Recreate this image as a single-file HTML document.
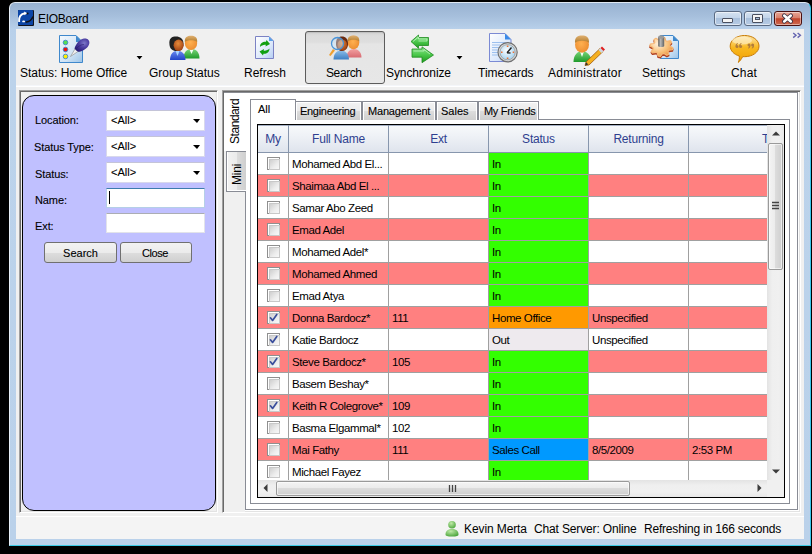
<!DOCTYPE html>
<html><head><meta charset="utf-8">
<style>
*{box-sizing:border-box;margin:0;padding:0}
html,body{width:812px;height:554px;overflow:hidden;background:#000;font-family:"Liberation Sans",sans-serif;color:#000}
.a{position:absolute}
#win{left:9px;top:2px;width:802px;height:544px;border-radius:6px 6px 0 0;
 background:linear-gradient(#98b2d1 0px,#a6bfdc 13px,#b8d0ea 26px,#bcd3eb 60px,#bad1ea 100%);
 border-top:1px solid #dfe8f2;border-left:1px solid #e8f0f8;border-right:1px solid #38c6ea;border-bottom:1px solid #3ccbe6}
#client{left:16px;top:29px;width:788px;height:510px;background:#f0f0f0}
.t12{font-size:12px;line-height:14px;white-space:nowrap}
.t11{font-size:11px;line-height:13px;white-space:nowrap}
.tbt{top:66px;font-size:12px;line-height:14px;white-space:nowrap;color:#000}
.lab{left:35px;font-size:11px;line-height:13px;letter-spacing:-0.1px;-webkit-text-stroke:0.1px #000}
.combo{left:106px;width:99px;height:21px;background:#fff;border:1px solid #d8d8ec;border-top-color:#c4c4d8;border-radius:1px}
.combo span{position:absolute;left:4px;top:3px;font-size:11px;line-height:13px;-webkit-text-stroke:0.1px #000}
.combo i{position:absolute;left:86px;top:8px;width:0;height:0;border-left:4px solid transparent;border-right:3px solid transparent;border-top:4px solid #000}
.btn{top:242px;height:21px;border:1px solid #707070;border-radius:3px;background:linear-gradient(#f2f2f2 0,#ebebeb 50%,#dddddd 51%,#cfcfcf 100%);font-size:11px;line-height:13px;text-align:center;padding-top:4px;-webkit-text-stroke:0.1px #000}
.sunk{border-top:1px solid #a0a0a0;border-left:1px solid #a0a0a0;border-right:1px solid #fff;border-bottom:1px solid #fff;box-shadow:inset 1px 1px 0 #696969,inset -1px -1px 0 #e3e3e3}
.cb{width:13px;height:13px;border:1px solid #8f8f8f;background:#fff}
.cb:after{content:"";position:absolute;left:1px;top:1px;width:9px;height:9px;border:1px solid #c8c8c8;background:linear-gradient(135deg,#cfcfcf 0,#ededed 60%,#f8f8f8 100%)}
.cell{font-size:11.5px;letter-spacing:-0.4px}
</style></head><body>
<div id="win" class="a"></div>
<!-- title icon -->
<svg class="a" style="left:18px;top:10px" width="16" height="16" viewBox="0 0 16 16">
<rect x="0" y="0" width="16" height="16" rx="1" fill="#10131c"/>
<rect x="0" y="0" width="15" height="15" rx="1" fill="#0b45a6"/>
<path d="M1.2 12 C0.6 7 2.8 3.6 7 3.2" stroke="#fff" stroke-width="1.9" fill="none"/>
<path d="M6.2 1.4 L9.4 3.3 L6.4 5.2 Z" fill="#fff"/>
<circle cx="9.6" cy="3.5" r="1" fill="#111"/>
<ellipse cx="5.6" cy="11.4" rx="1.5" ry="0.9" fill="#fff"/>
<path d="M7.6 11.9 C10.5 12.2 13.6 10.2 15 6.6" stroke="#111" stroke-width="1.5" fill="none"/>
</svg>
<div class="a t12" style="left:38px;top:12px;letter-spacing:-0.3px;color:#000">EIOBoard</div>
<!-- caption buttons -->
<div class="a" style="left:714px;top:11px;width:28px;height:15px;border:1px solid #5a6a82;border-radius:3px;background:linear-gradient(#d5e2f0 0,#c3d5ea 45%,#a9c0dc 50%,#b6cbe4 100%);box-shadow:inset 0 0 0 1px rgba(255,255,255,.55)"></div>
<div class="a" style="left:722px;top:18px;width:11px;height:5px;background:#f4f4f4;border:1px solid #4a5060;border-radius:1px"></div>
<div class="a" style="left:744px;top:11px;width:28px;height:15px;border:1px solid #5a6a82;border-radius:3px;background:linear-gradient(#d5e2f0 0,#c3d5ea 45%,#a9c0dc 50%,#b6cbe4 100%);box-shadow:inset 0 0 0 1px rgba(255,255,255,.55)"></div>
<div class="a" style="left:752px;top:14px;width:11px;height:9px;background:#f4f4f4;border:1px solid #4a5060;border-radius:1px"></div>
<div class="a" style="left:755px;top:17px;width:5px;height:3px;background:#a9c0dc;border:1px solid #4a5060"></div>
<div class="a" style="left:774px;top:11px;width:28px;height:15px;border:1px solid #4a1010;border-radius:3px;background:linear-gradient(#e8a595 0,#d9806c 45%,#c0432a 52%,#cf6a52 100%);box-shadow:inset 0 0 0 1px rgba(255,255,255,.45)"></div>
<svg class="a" style="left:781px;top:13px" width="13" height="11" viewBox="0 0 13 11">
<path d="M3.2 2.6 L9.8 8.4 M9.8 2.6 L3.2 8.4" stroke="#3a3040" stroke-width="4.2" stroke-linecap="round"/>
<path d="M3.2 2.6 L9.8 8.4 M9.8 2.6 L3.2 8.4" stroke="#fff" stroke-width="2.6" stroke-linecap="round"/>
</svg>

<div id="client" class="a"></div>
<!-- toolbar bottom line -->
<div class="a" style="left:16px;top:85px;width:788px;height:1px;background:#f4f6fa"></div><div class="a" style="left:16px;top:86px;width:788px;height:1px;background:#fff"></div>

<!-- toolbar texts -->
<div class="a tbt" style="left:20px;">Status: Home Office</div>
<div class="a tbt" style="left:149px;">Group Status</div>
<div class="a tbt" style="left:244px;">Refresh</div>
<div class="a" style="left:305px;top:31px;width:80px;height:53px;border:1px solid #5c5c5c;border-radius:3px;background:linear-gradient(#d2d2d2 0,#dcdcdc 4px,#dedede 10px,#e5e5e5 12px,#e7e7e7 100%);box-shadow:inset 0 1px 1px rgba(0,0,0,.10)"></div>
<div class="a tbt" style="left:326px;letter-spacing:-0.4px">Search</div>
<div class="a tbt" style="left:386px;letter-spacing:-0.1px">Synchronize</div>
<div class="a tbt" style="left:478px;">Timecards</div>
<div class="a tbt" style="left:548px;letter-spacing:0.25px">Administrator</div>
<div class="a tbt" style="left:642px;letter-spacing:0px">Settings</div>
<div class="a tbt" style="left:731px;letter-spacing:0.2px">Chat</div>
<svg class="a" style="left:0;top:0" width="812" height="90" viewBox="0 0 812 90">
<defs>
 <linearGradient id="docg" x1="0" y1="0" x2="1" y2="1"><stop offset="0" stop-color="#f4f9fe"/><stop offset="0.6" stop-color="#cfe3f5"/><stop offset="1" stop-color="#9cc4e8"/></linearGradient>
 <linearGradient id="docg2" x1="0" y1="0" x2="1" y2="1"><stop offset="0" stop-color="#ffffff"/><stop offset="0.6" stop-color="#dde9fb"/><stop offset="1" stop-color="#b4cdf3"/></linearGradient>
 <radialGradient id="pen" cx="0.65" cy="0.35" r="0.7"><stop offset="0" stop-color="#7d78c8"/><stop offset="0.5" stop-color="#4a3ca0"/><stop offset="1" stop-color="#2a1e78"/></radialGradient>
 <radialGradient id="face1" cx="0.45" cy="0.35" r="0.7"><stop offset="0" stop-color="#e58a3a"/><stop offset="1" stop-color="#9a3a10"/></radialGradient>
 <radialGradient id="face2" cx="0.45" cy="0.45" r="0.7"><stop offset="0" stop-color="#ffb050"/><stop offset="1" stop-color="#e8862a"/></radialGradient>
 <linearGradient id="hair2" x1="0" y1="0" x2="0" y2="1"><stop offset="0" stop-color="#e0b070"/><stop offset="1" stop-color="#b07a2a"/></linearGradient>
 <linearGradient id="blue1" x1="0" y1="0" x2="0" y2="1"><stop offset="0" stop-color="#6d8cf0"/><stop offset="1" stop-color="#2244c8"/></linearGradient>
 <linearGradient id="green1" x1="0" y1="0" x2="0" y2="1"><stop offset="0" stop-color="#7ad67a"/><stop offset="1" stop-color="#1f9a2a"/></linearGradient>
 <linearGradient id="blue2" x1="0" y1="0" x2="0" y2="1"><stop offset="0" stop-color="#8cbde8"/><stop offset="1" stop-color="#3d7fc4"/></linearGradient>
 <linearGradient id="pink2" x1="0" y1="0" x2="0" y2="1"><stop offset="0" stop-color="#f2a0a0"/><stop offset="1" stop-color="#d86a72"/></linearGradient>
 <linearGradient id="arrg" x1="0" y1="0" x2="0" y2="1"><stop offset="0" stop-color="#8ee68e"/><stop offset="0.5" stop-color="#4cc84c"/><stop offset="1" stop-color="#1a9a1a"/></linearGradient>
 <radialGradient id="clockf" cx="0.45" cy="0.4" r="0.6"><stop offset="0" stop-color="#ffffff"/><stop offset="1" stop-color="#a8d4f0"/></radialGradient>
 <radialGradient id="gear" cx="0.35" cy="0.35" r="0.75"><stop offset="0" stop-color="#fff0dc"/><stop offset="0.6" stop-color="#f8c078"/><stop offset="1" stop-color="#e89040"/></radialGradient>
 <linearGradient id="cyl" x1="0" y1="0" x2="1" y2="0"><stop offset="0" stop-color="#5a5a5a"/><stop offset="0.4" stop-color="#b8b8b8"/><stop offset="1" stop-color="#606060"/></linearGradient>
 <linearGradient id="chatg" x1="0" y1="0" x2="0" y2="1"><stop offset="0" stop-color="#fde4a8"/><stop offset="0.45" stop-color="#f8b820"/><stop offset="1" stop-color="#f0a000"/></linearGradient>
</defs>

<!-- 1 Status icon -->
<path d="M59.5 35.5 H76 L82.5 42 V62.5 H59.5 Z" fill="url(#docg)" stroke="#3f88cc" stroke-width="1"/>
<path d="M76 35.5 V42 H82.5 Z" fill="#3f88cc"/>
<circle cx="65.5" cy="42.5" r="2.3" fill="#55dd55" stroke="#3f88cc" stroke-width="0.9"/>
<circle cx="65.5" cy="49.5" r="2.3" fill="#ee1111" stroke="#3f88cc" stroke-width="0.9"/>
<circle cx="65.5" cy="56.5" r="2.3" fill="#ffee00" stroke="#3f88cc" stroke-width="0.9"/>
<path d="M70.5 56.5 L75.2 48.6 L78.4 51.2 Z" fill="#f0f0f0" stroke="#8a8a8a" stroke-width="0.6"/>
<path d="M74.5 48.5 C76 44 79 40 83 38.8 C87 37.6 90 40 89.3 43.6 C88.6 47.3 84.5 50.6 79.5 51.8 C78.5 52 77 51.5 74.5 48.5 Z" fill="url(#pen)"/>
<path d="M76 49 C78.5 46 81 44.5 84 44.5" stroke="#2a2070" stroke-width="1" fill="none" opacity="0.6"/>

<!-- 2 Group status -->
<path d="M183.5 58.5 C183.5 52 187 49 191.5 49 C196 49 199.5 52 199.5 58.5 Z" fill="url(#green1)"/>
<path d="M189.5 49.5 L191.5 54 L193.5 49.5 Z" fill="#f4fff4"/>
<ellipse cx="191" cy="43" rx="6.2" ry="7" fill="url(#face2)"/>
<path d="M184.8 42 C184.5 37 187.5 35.8 191 35.8 C194.5 35.8 197.5 37 197.2 42 C195 39.5 187 39.5 184.8 42 Z" fill="url(#hair2)"/>
<path d="M170 60 C170 54 173.5 50.5 177.5 50.5 C181.5 50.5 185.5 54 185.5 60 Z" fill="url(#blue1)"/>
<path d="M175.5 51 L177.5 56 L179.5 51 Z" fill="#a8d4ff"/>
<path d="M169.5 45 C168.5 38 172 36.5 176 36.5 C180 36.5 183.5 38.5 183.5 44 C183.5 48 181 51 176.5 51 C172 51 170 48.5 169.5 45 Z" fill="#222"/>
<ellipse cx="178.6" cy="45.3" rx="5" ry="5.8" fill="url(#face1)"/>

<!-- 3 Refresh -->
<path d="M255.5 36.5 H269 L273.5 41 V58.5 H255.5 Z" fill="url(#docg2)" stroke="#7b82c4" stroke-width="1"/>
<path d="M269 36.5 V41 H273.5 Z" fill="#5aa0e8"/>
<path d="M260 47 C260 43 263 41.5 266 41.8 L266.5 40 L270 44 L265.5 46.5 L265.8 44.8 C263.5 44.5 261.5 45.5 260 47 Z" fill="#10a010"/>
<path d="M269.5 48.5 C269.5 52.5 266.5 54 263.5 53.7 L263 55.5 L259.5 51.5 L264 49 L263.7 50.7 C266 51 268 50 269.5 48.5 Z" fill="#10a010"/>

<!-- 4 Search -->
<path d="M346.5 57.5 C346.5 52 350 49 354 49 C358 49 361.5 52 361.5 57.5 Z" fill="url(#pink2)"/>
<ellipse cx="353.5" cy="42.5" rx="5.8" ry="6.8" fill="url(#face2)"/>
<path d="M347.7 41.5 C347.3 37 350 35.5 353.5 35.5 C357 35.5 359.7 37 359.3 41.5 C357 39 350 39 347.7 41.5 Z" fill="url(#hair2)"/>
<path d="M333.5 59.5 C333.5 53.5 337 50.5 341 50.5 C345 50.5 349 53.5 349 59.5 Z" fill="url(#blue2)"/>
<path d="M336 45 C335.5 38.5 338.5 36.5 342 36.5 C345.5 36.5 348 38.5 348 44 C348 48 345.5 51 342 51 C338.5 51 336.5 48.5 336 45 Z" fill="#6a2a10"/>
<ellipse cx="342.3" cy="45" rx="4.8" ry="5.6" fill="url(#face1)"/>
<path d="M333 49 L329 55 L330.5 56 L335 50.5 Z" fill="#f0a030"/>
<circle cx="337.5" cy="43.5" r="6" fill="rgba(200,230,255,0.45)" stroke="#4a94d8" stroke-width="1.3"/>

<!-- 5 Synchronize -->
<path d="M411 41.5 L418.5 35 V37.5 H428.5 V45.5 H418.5 V48.3 Z" fill="url(#arrg)" stroke="#1e8a1e" stroke-width="0.8"/>
<path d="M413 41.5 L418.5 37 V39 H427 V41 H418.5" fill="none" stroke="#c8f5c8" stroke-width="0.9" opacity="0.8"/>
<path d="M433.5 55 L422 46.8 V49 H412 V57.2 H422 V62.7 Z" fill="url(#arrg)" stroke="#1e8a1e" stroke-width="0.8"/>
<path d="M413.5 51 H424 V49.5 L430 54" fill="none" stroke="#c8f5c8" stroke-width="0.9" opacity="0.8"/>

<!-- 6 Timecards -->
<path d="M489.5 33.5 H505 L511 39.5 V61.5 H489.5 Z" fill="url(#docg2)" stroke="#7b8ad4" stroke-width="1"/>
<path d="M505 33.5 V39.5 H511 Z" fill="#3a8ae8"/>
<path d="M492 42.5 H508 M492 45 H500 M492 47.5 H500 M492 50 H499 M492 52.5 H499 M492 55 H499" stroke="#9cc0ee" stroke-width="1.2"/>
<circle cx="507.6" cy="52.2" r="9.6" fill="#d8d8d8" stroke="#707070" stroke-width="1.2"/>
<circle cx="507.6" cy="52.2" r="7.6" fill="url(#clockf)" stroke="#888" stroke-width="0.6"/>
<path d="M507.6 45.5 V47 M507.6 57.5 V59 M501 52.2 H502.5 M512.7 52.2 H514.2" stroke="#f07030" stroke-width="1.6"/>
<path d="M507 52.8 L511.5 47.5 M507 52.8 L510.5 53" stroke="#222" stroke-width="1.4"/>

<!-- 7 Administrator -->
<path d="M573.5 62 C573.5 55 577.5 51 582 51 C586.5 51 591.5 55 591.5 62 Z" fill="url(#green1)"/>
<path d="M580 51.5 L582 57 L584 51.5 Z" fill="#f4fff4"/>
<ellipse cx="582" cy="44.5" rx="7" ry="8.2" fill="url(#face2)"/>
<path d="M575 43 C574.5 37 578 35.5 582 35.5 C586 35.5 589.5 37 589 43 C587 40 577 40 575 43 Z" fill="url(#hair2)"/>
<path d="M586 62 L600 48.5 L603 51.5 L589 65 L585 65.5 Z" fill="#f5b020" stroke="#a05a10" stroke-width="0.8"/>
<path d="M598.5 50 L601 47.5 L604 50.5 L601.5 53 Z" fill="#cfd6e0"/>
<path d="M600.5 48 L602 46.5 L605 49.5 L603.5 51 Z" fill="#e02020"/>
<path d="M585 65.5 L586.2 62.3 L588.3 64.4 Z" fill="#333"/>

<!-- 8 Settings -->
<path d="M660.5 35.5 H673 L678.5 41 V58.5 H660.5 Z" fill="url(#docg)" stroke="#3f88cc" stroke-width="1"/>
<path d="M673 35.5 V41 H678.5 Z" fill="#3f88cc"/>
<path d="M662.5 37.2 L664.8 37.6 L665.4 40.5 L666.8 41.3 L670.4 40.7 L671.6 42.3 L669.6 44.7 L669.9 46.1 L672.9 47.7 L672.5 49.6 L669.0 50.1 L668.0 51.3 L668.8 54.2 L666.9 55.3 L663.9 53.6 L662.2 53.9 L660.3 56.4 L658.0 56.0 L657.4 53.1 L656.0 52.3 L652.4 52.9 L651.2 51.3 L653.2 48.9 L652.9 47.5 L649.9 45.9 L650.3 44.0 L653.8 43.5 L654.8 42.3 L654.0 39.4 L655.9 38.3 L658.9 40.0 L660.6 39.7 Z" transform="translate(0,1.4)" fill="#b04020" stroke="#b04020" stroke-width="1.4" stroke-linejoin="round"/>
<path d="M662.5 37.2 L664.8 37.6 L665.4 40.5 L666.8 41.3 L670.4 40.7 L671.6 42.3 L669.6 44.7 L669.9 46.1 L672.9 47.7 L672.5 49.6 L669.0 50.1 L668.0 51.3 L668.8 54.2 L666.9 55.3 L663.9 53.6 L662.2 53.9 L660.3 56.4 L658.0 56.0 L657.4 53.1 L656.0 52.3 L652.4 52.9 L651.2 51.3 L653.2 48.9 L652.9 47.5 L649.9 45.9 L650.3 44.0 L653.8 43.5 L654.8 42.3 L654.0 39.4 L655.9 38.3 L658.9 40.0 L660.6 39.7 Z" fill="url(#gear)" stroke="#f6b878" stroke-width="1.2" stroke-linejoin="round"/>
<path d="M658.2 37 V46 C658.2 47.3 664.2 47.3 664.2 46 V37 Z" fill="url(#cyl)"/>
<ellipse cx="661.2" cy="37" rx="3" ry="1.8" fill="#9a9a9a"/>

<!-- 9 Chat -->
<path d="M744.6 35.5 C752.5 35.5 759 40 759 46.1 C759 52.2 752.5 56.7 744.6 56.7 C744 56.7 743.3 56.7 742.7 56.6 C741.5 59 739.5 61.5 738.4 62.4 C739.2 60 739.5 58 739.3 56 C734 54.5 730.2 50.6 730.2 46.1 C730.2 40 736.7 35.5 744.6 35.5 Z" fill="url(#chatg)" stroke="#c87a00" stroke-width="1"/>
<ellipse cx="742" cy="40.5" rx="10" ry="4" fill="rgba(255,245,220,0.55)"/>
<g fill="#b07c3c">
<circle cx="737" cy="46.6" r="1.5"/><path d="M735.6 46.4 C735.4 44.6 736.2 43.4 737.8 43 L738 43.7 C737.1 44.1 736.8 44.9 737 45.6 Z"/>
<circle cx="740.6" cy="46.6" r="1.5"/><path d="M739.2 46.4 C739 44.6 739.8 43.4 741.4 43 L741.6 43.7 C740.7 44.1 740.4 44.9 740.6 45.6 Z"/>
<circle cx="749" cy="45" r="1.5"/><path d="M750.4 45.2 C750.6 47 749.8 48.2 748.2 48.6 L748 47.9 C748.9 47.5 749.2 46.7 749 46 Z"/>
<circle cx="752.6" cy="45" r="1.5"/><path d="M754 45.2 C754.2 47 753.4 48.2 751.8 48.6 L751.6 47.9 C752.5 47.5 752.8 46.7 752.6 46 Z"/>
</g>
</svg>

<!-- dropdown arrows -->
<svg class="a" style="left:135px;top:55px" width="9" height="7" viewBox="0 0 9 7"><path d="M0.5 0.5 L8.5 0.5 L4.5 5.5 Z" fill="#fff"/><path d="M1.5 1 L7.5 1 L4.5 4.6 Z" fill="#000"/></svg>
<svg class="a" style="left:455px;top:55px" width="9" height="7" viewBox="0 0 9 7"><path d="M0.5 0.5 L8.5 0.5 L4.5 5.5 Z" fill="#fff"/><path d="M1.5 1 L7.5 1 L4.5 4.6 Z" fill="#000"/></svg>
<svg class="a" style="left:792px;top:32px" width="10" height="7" viewBox="0 0 10 7"><path d="M1.2 1 L4 3.3 L1.2 5.6 M5.6 1 L8.4 3.3 L5.6 5.6" stroke="#6464b0" stroke-width="1.4" fill="none"/></svg>

<!-- left panel -->
<div class="a sunk" style="left:19px;top:90px;width:199px;height:423px;"></div>
<div class="a" style="left:22px;top:95px;width:194px;height:416px;background:#c0c0ff;border:1px solid #000;border-radius:12px"></div>
<div class="a lab" style="top:114px">Location:</div>
<div class="a lab" style="top:141px;left:34px">Status Type:</div>
<div class="a lab" style="top:168px">Status:</div>
<div class="a lab" style="top:194px">Name:</div>
<div class="a lab" style="top:220px">Ext:</div>
<div class="a combo" style="top:110px"><span>&lt;All&gt;</span><i></i></div>
<div class="a combo" style="top:136px"><span>&lt;All&gt;</span><i></i></div>
<div class="a combo" style="top:162px"><span>&lt;All&gt;</span><i></i></div>
<div class="a" style="left:106px;top:188px;width:99px;height:20px;background:#fff;border:1px solid #b5cfe7;border-top-color:#3d7bad"></div>
<div class="a" style="left:109px;top:191px;width:1px;height:13px;background:#000"></div>
<div class="a" style="left:106px;top:213px;width:99px;height:20px;background:#fff;border:1px solid #e2e3ea;border-top-color:#abadb3"></div>
<div class="a btn" style="left:44px;width:73px">Search</div>
<div class="a btn" style="left:120px;width:72px;letter-spacing:-0.4px;padding-right:2px">Close</div>

<!-- right panel -->
<div class="a sunk" style="left:222px;top:90px;width:579px;height:423px;background:#fff"></div>
<div class="a" style="left:224px;top:92px;width:21px;height:420px;background:#f0f0f0"></div>
<div class="a" style="left:245px;top:92px;width:553px;height:418px;background:#fff;border:1px solid #898c95;border-top:none"></div>
<div class="a" style="left:224px;top:92px;width:26px;height:59px;background:#fff"></div>
<div class="a" style="left:224px;top:92px;width:574px;height:1px;background:#8a8c92"></div>
<div class="a t12" style="left:228px;top:144px;transform-origin:0 0;transform:rotate(-90deg);font-size:12px;line-height:14px;letter-spacing:-0.45px">Standard</div>
<div class="a" style="left:226px;top:151px;width:20px;height:41px;border:1px solid #898c95;border-right:none;box-shadow:inset 1px 0 0 #fff,inset 0 -1px 0 #fff;background:linear-gradient(90deg,#f2f2f2 0,#ebebeb 50%,#dddddd 51%,#cfcfcf 100%)"></div>
<div class="a" style="left:230px;top:185px;transform-origin:0 0;transform:rotate(-90deg);font-size:12px;line-height:14px;letter-spacing:-0.2px">Mini</div>
<div class="a" style="left:250px;top:119px;width:540px;height:385px;border:1px solid #898c95;background:#fff"></div>
<div class="a" style="left:295px;top:101px;width:67px;height:19px;border:1px solid #898c95;border-bottom:none;box-shadow:inset 1px 1px 0 #fff,inset -1px 0 0 #fff;background:linear-gradient(#f2f2f2 0,#ebebeb 50%,#dddddd 51%,#cfcfcf 100%)"></div>
<div class="a t11" style="left:300px;top:105px;letter-spacing:-0.3px;-webkit-text-stroke:0.1px #000">Engineering</div>
<div class="a" style="left:362px;top:101px;width:74px;height:19px;border:1px solid #898c95;border-bottom:none;box-shadow:inset 1px 1px 0 #fff,inset -1px 0 0 #fff;background:linear-gradient(#f2f2f2 0,#ebebeb 50%,#dddddd 51%,#cfcfcf 100%)"></div>
<div class="a t11" style="left:368px;top:105px;letter-spacing:-0.2px;-webkit-text-stroke:0.1px #000">Management</div>
<div class="a" style="left:436px;top:101px;width:42px;height:19px;border:1px solid #898c95;border-bottom:none;box-shadow:inset 1px 1px 0 #fff,inset -1px 0 0 #fff;background:linear-gradient(#f2f2f2 0,#ebebeb 50%,#dddddd 51%,#cfcfcf 100%)"></div>
<div class="a t11" style="left:441px;top:105px;letter-spacing:0px;-webkit-text-stroke:0.1px #000">Sales</div>
<div class="a" style="left:478px;top:101px;width:61px;height:19px;border:1px solid #898c95;border-bottom:none;box-shadow:inset 1px 1px 0 #fff,inset -1px 0 0 #fff;background:linear-gradient(#f2f2f2 0,#ebebeb 50%,#dddddd 51%,#cfcfcf 100%)"></div>
<div class="a t11" style="left:484px;top:105px;letter-spacing:-0.3px;-webkit-text-stroke:0.1px #000">My Friends</div>
<div class="a" style="left:250px;top:99px;width:46px;height:21px;border:1px solid #898c95;border-bottom:none;background:#fff"></div>
<div class="a t11" style="left:258px;top:103px;-webkit-text-stroke:0.1px #000">All</div>
<div class="a" style="left:257px;top:124px;width:528px;height:374px;border:1px solid #000;background:#fff"></div>
<div class="a" style="left:258px;top:125px;width:509px;height:27px;background:linear-gradient(#f7f9fb 0,#eef1f6 40%,#dfe4ed 100%);border-top:1px solid #a4b0c4"></div>
<div class="a" style="left:258px;top:152px;width:509px;height:1px;background:#8796ad"></div>
<div class="a" style="left:288px;top:125px;width:1px;height:27px;background:#8796ad"></div>
<div class="a t12" style="left:258px;width:30px;top:132px;text-align:center;color:#2e3f8f;letter-spacing:-0.2px">My</div>
<div class="a" style="left:388px;top:125px;width:1px;height:27px;background:#8796ad"></div>
<div class="a t12" style="left:289px;width:99px;top:132px;text-align:center;color:#2e3f8f;letter-spacing:-0.2px">Full Name</div>
<div class="a" style="left:488px;top:125px;width:1px;height:27px;background:#8796ad"></div>
<div class="a t12" style="left:389px;width:99px;top:132px;text-align:center;color:#2e3f8f;letter-spacing:-0.2px">Ext</div>
<div class="a" style="left:588px;top:125px;width:1px;height:27px;background:#8796ad"></div>
<div class="a t12" style="left:489px;width:99px;top:132px;text-align:center;color:#2e3f8f;letter-spacing:-0.2px">Status</div>
<div class="a" style="left:688px;top:125px;width:1px;height:27px;background:#8796ad"></div>
<div class="a t12" style="left:589px;width:99px;top:132px;text-align:center;color:#2e3f8f;letter-spacing:-0.2px">Returning</div>
<div class="a t12" style="left:762px;top:132px;color:#2e3f8f">T</div>
<div class="a" style="left:258px;top:153px;width:509px;height:21px;background:#fff"></div>
<div class="a" style="left:489px;top:153px;width:99px;height:21px;background:#33ff00"></div>
<div class="a" style="left:258px;top:174px;width:509px;height:1px;background:#a0a0a0"></div>
<div class="a cb" style="left:267px;top:157px"></div>
<div class="a t11 cell" style="left:292px;top:158px">Mohamed Abd El...</div>
<div class="a t11 cell" style="left:492px;top:158px">In</div>
<div class="a" style="left:258px;top:175px;width:509px;height:21px;background:#ff8080"></div>
<div class="a" style="left:489px;top:175px;width:99px;height:21px;background:#33ff00"></div>
<div class="a" style="left:258px;top:196px;width:509px;height:1px;background:#a0a0a0"></div>
<div class="a cb" style="left:267px;top:179px"></div>
<div class="a t11 cell" style="left:292px;top:180px">Shaimaa Abd El ...</div>
<div class="a t11 cell" style="left:492px;top:180px">In</div>
<div class="a" style="left:258px;top:197px;width:509px;height:21px;background:#fff"></div>
<div class="a" style="left:489px;top:197px;width:99px;height:21px;background:#33ff00"></div>
<div class="a" style="left:258px;top:218px;width:509px;height:1px;background:#a0a0a0"></div>
<div class="a cb" style="left:267px;top:201px"></div>
<div class="a t11 cell" style="left:292px;top:202px">Samar Abo Zeed</div>
<div class="a t11 cell" style="left:492px;top:202px">In</div>
<div class="a" style="left:258px;top:219px;width:509px;height:21px;background:#ff8080"></div>
<div class="a" style="left:489px;top:219px;width:99px;height:21px;background:#33ff00"></div>
<div class="a" style="left:258px;top:240px;width:509px;height:1px;background:#a0a0a0"></div>
<div class="a cb" style="left:267px;top:223px"></div>
<div class="a t11 cell" style="left:292px;top:224px">Emad Adel</div>
<div class="a t11 cell" style="left:492px;top:224px">In</div>
<div class="a" style="left:258px;top:241px;width:509px;height:21px;background:#fff"></div>
<div class="a" style="left:489px;top:241px;width:99px;height:21px;background:#33ff00"></div>
<div class="a" style="left:258px;top:262px;width:509px;height:1px;background:#a0a0a0"></div>
<div class="a cb" style="left:267px;top:245px"></div>
<div class="a t11 cell" style="left:292px;top:246px">Mohamed Adel*</div>
<div class="a t11 cell" style="left:492px;top:246px">In</div>
<div class="a" style="left:258px;top:263px;width:509px;height:21px;background:#ff8080"></div>
<div class="a" style="left:489px;top:263px;width:99px;height:21px;background:#33ff00"></div>
<div class="a" style="left:258px;top:284px;width:509px;height:1px;background:#a0a0a0"></div>
<div class="a cb" style="left:267px;top:267px"></div>
<div class="a t11 cell" style="left:292px;top:268px">Mohamed Ahmed</div>
<div class="a t11 cell" style="left:492px;top:268px">In</div>
<div class="a" style="left:258px;top:285px;width:509px;height:21px;background:#fff"></div>
<div class="a" style="left:489px;top:285px;width:99px;height:21px;background:#33ff00"></div>
<div class="a" style="left:258px;top:306px;width:509px;height:1px;background:#a0a0a0"></div>
<div class="a cb" style="left:267px;top:289px"></div>
<div class="a t11 cell" style="left:292px;top:290px">Emad Atya</div>
<div class="a t11 cell" style="left:492px;top:290px">In</div>
<div class="a" style="left:258px;top:307px;width:509px;height:21px;background:#ff8080"></div>
<div class="a" style="left:489px;top:307px;width:99px;height:21px;background:#ff9900"></div>
<div class="a" style="left:258px;top:328px;width:509px;height:1px;background:#a0a0a0"></div>
<div class="a cb" style="left:267px;top:311px"></div>
<svg class="a" style="left:267px;top:311px" width="13" height="13" viewBox="0 0 13 13"><path d="M3.4 6.8 L5.6 9.4 L9.8 3.4" stroke="#3a4e9c" stroke-width="1.7" fill="none" stroke-linejoin="round" stroke-linecap="round"/></svg>
<div class="a t11 cell" style="left:292px;top:312px">Donna Bardocz*</div>
<div class="a t11 cell" style="left:392px;top:312px">111</div>
<div class="a t11 cell" style="left:492px;top:312px">Home Office</div>
<div class="a t11 cell" style="left:592px;top:312px">Unspecified</div>
<div class="a" style="left:258px;top:329px;width:509px;height:21px;background:#fff"></div>
<div class="a" style="left:489px;top:329px;width:99px;height:21px;background:#eeeaee"></div>
<div class="a" style="left:258px;top:350px;width:509px;height:1px;background:#a0a0a0"></div>
<div class="a cb" style="left:267px;top:333px"></div>
<svg class="a" style="left:267px;top:333px" width="13" height="13" viewBox="0 0 13 13"><path d="M3.4 6.8 L5.6 9.4 L9.8 3.4" stroke="#3a4e9c" stroke-width="1.7" fill="none" stroke-linejoin="round" stroke-linecap="round"/></svg>
<div class="a t11 cell" style="left:292px;top:334px">Katie Bardocz</div>
<div class="a t11 cell" style="left:492px;top:334px">Out</div>
<div class="a t11 cell" style="left:592px;top:334px">Unspecified</div>
<div class="a" style="left:258px;top:351px;width:509px;height:21px;background:#ff8080"></div>
<div class="a" style="left:489px;top:351px;width:99px;height:21px;background:#33ff00"></div>
<div class="a" style="left:258px;top:372px;width:509px;height:1px;background:#a0a0a0"></div>
<div class="a cb" style="left:267px;top:355px"></div>
<svg class="a" style="left:267px;top:355px" width="13" height="13" viewBox="0 0 13 13"><path d="M3.4 6.8 L5.6 9.4 L9.8 3.4" stroke="#3a4e9c" stroke-width="1.7" fill="none" stroke-linejoin="round" stroke-linecap="round"/></svg>
<div class="a t11 cell" style="left:292px;top:356px">Steve Bardocz*</div>
<div class="a t11 cell" style="left:392px;top:356px">105</div>
<div class="a t11 cell" style="left:492px;top:356px">In</div>
<div class="a" style="left:258px;top:373px;width:509px;height:21px;background:#fff"></div>
<div class="a" style="left:489px;top:373px;width:99px;height:21px;background:#33ff00"></div>
<div class="a" style="left:258px;top:394px;width:509px;height:1px;background:#a0a0a0"></div>
<div class="a cb" style="left:267px;top:377px"></div>
<div class="a t11 cell" style="left:292px;top:378px">Basem Beshay*</div>
<div class="a t11 cell" style="left:492px;top:378px">In</div>
<div class="a" style="left:258px;top:395px;width:509px;height:21px;background:#ff8080"></div>
<div class="a" style="left:489px;top:395px;width:99px;height:21px;background:#33ff00"></div>
<div class="a" style="left:258px;top:416px;width:509px;height:1px;background:#a0a0a0"></div>
<div class="a cb" style="left:267px;top:399px"></div>
<svg class="a" style="left:267px;top:399px" width="13" height="13" viewBox="0 0 13 13"><path d="M3.4 6.8 L5.6 9.4 L9.8 3.4" stroke="#3a4e9c" stroke-width="1.7" fill="none" stroke-linejoin="round" stroke-linecap="round"/></svg>
<div class="a t11 cell" style="left:292px;top:400px">Keith R Colegrove*</div>
<div class="a t11 cell" style="left:392px;top:400px">109</div>
<div class="a t11 cell" style="left:492px;top:400px">In</div>
<div class="a" style="left:258px;top:417px;width:509px;height:21px;background:#fff"></div>
<div class="a" style="left:489px;top:417px;width:99px;height:21px;background:#33ff00"></div>
<div class="a" style="left:258px;top:438px;width:509px;height:1px;background:#a0a0a0"></div>
<div class="a cb" style="left:267px;top:421px"></div>
<div class="a t11 cell" style="left:292px;top:422px">Basma Elgammal*</div>
<div class="a t11 cell" style="left:392px;top:422px">102</div>
<div class="a t11 cell" style="left:492px;top:422px">In</div>
<div class="a" style="left:258px;top:439px;width:509px;height:21px;background:#ff8080"></div>
<div class="a" style="left:489px;top:439px;width:99px;height:21px;background:#0099ff"></div>
<div class="a" style="left:258px;top:460px;width:509px;height:1px;background:#a0a0a0"></div>
<div class="a cb" style="left:267px;top:443px"></div>
<div class="a t11 cell" style="left:292px;top:444px">Mai Fathy</div>
<div class="a t11 cell" style="left:392px;top:444px">111</div>
<div class="a t11 cell" style="left:492px;top:444px">Sales Call</div>
<div class="a t11 cell" style="left:592px;top:444px">8/5/2009</div>
<div class="a t11 cell" style="left:692px;top:444px">2:53 PM</div>
<div class="a" style="left:258px;top:461px;width:509px;height:19px;background:#fff"></div>
<div class="a" style="left:489px;top:461px;width:99px;height:19px;background:#33ff00"></div>
<div class="a cb" style="left:267px;top:465px"></div>
<div class="a t11 cell" style="left:292px;top:466px">Michael Fayez</div>
<div class="a t11 cell" style="left:492px;top:466px">In</div>
<div class="a" style="left:288px;top:153px;width:1px;height:327px;background:#a0a0a0"></div>
<div class="a" style="left:388px;top:153px;width:1px;height:327px;background:#a0a0a0"></div>
<div class="a" style="left:488px;top:153px;width:1px;height:327px;background:#a0a0a0"></div>
<div class="a" style="left:588px;top:153px;width:1px;height:327px;background:#a0a0a0"></div>
<div class="a" style="left:688px;top:153px;width:1px;height:327px;background:#a0a0a0"></div>
<div class="a" style="left:767px;top:125px;width:17px;height:355px;background:linear-gradient(90deg,#e3e3e3 0,#efefef 30%,#f0f0f0 70%,#e8e8e8 100%)"></div>
<svg class="a" style="left:771px;top:130px" width="10" height="7" viewBox="0 0 10 7"><path d="M1 5.5 L5 1.5 L9 5.5 Z" fill="#3c3c3c"/></svg>
<svg class="a" style="left:771px;top:468px" width="10" height="7" viewBox="0 0 10 7"><path d="M1 1.5 L5 5.5 L9 1.5 Z" fill="#3c3c3c"/></svg>
<div class="a" style="left:768px;top:143px;width:15px;height:127px;border:1px solid #9a9a9a;border-radius:2px;background:linear-gradient(90deg,#f4f4f4 0,#ececec 45%,#dcdcdc 50%,#cfcfcf 100%);box-shadow:inset 0 0 0 1px rgba(255,255,255,.6)"></div>
<svg class="a" style="left:771px;top:201px" width="9" height="9" viewBox="0 0 9 9"><path d="M1 1.5 H8 M1 4.5 H8 M1 7.5 H8" stroke="#444" stroke-width="1.3"/></svg>
<div class="a" style="left:258px;top:480px;width:509px;height:17px;background:linear-gradient(#e3e3e3 0,#efefef 30%,#f0f0f0 70%,#e8e8e8 100%)"></div>
<svg class="a" style="left:262px;top:483px" width="7" height="10" viewBox="0 0 7 10"><path d="M5.5 1 L1.5 5 L5.5 9 Z" fill="#3c3c3c"/></svg>
<svg class="a" style="left:756px;top:483px" width="7" height="10" viewBox="0 0 7 10"><path d="M1.5 1 L5.5 5 L1.5 9 Z" fill="#3c3c3c"/></svg>
<div class="a" style="left:276px;top:481px;width:354px;height:15px;border:1px solid #9a9a9a;border-radius:2px;background:linear-gradient(#f4f4f4 0,#ececec 45%,#dcdcdc 50%,#cfcfcf 100%);box-shadow:inset 0 0 0 1px rgba(255,255,255,.6)"></div>
<svg class="a" style="left:448px;top:484px" width="9" height="9" viewBox="0 0 9 9"><path d="M1.5 1 V8 M4.5 1 V8 M7.5 1 V8" stroke="#444" stroke-width="1.3"/></svg>
<div class="a" style="left:767px;top:480px;width:17px;height:17px;background:#f0f0f0"></div>

<!-- status bar -->
<div class="a" style="left:16px;top:516px;width:788px;height:1px;background:#fff"></div>
<div class="a" style="left:16px;top:517px;width:788px;height:22px;background:#f4f4f4"></div>
<svg class="a" style="left:444px;top:520px" width="16" height="17" viewBox="0 0 16 17">
<defs><radialGradient id="ug" cx="0.4" cy="0.3" r="0.8"><stop offset="0" stop-color="#c0eaa8"/><stop offset="1" stop-color="#42a032"/></radialGradient></defs>
<path d="M1.5 14.5 C1.5 10.5 4.5 9 8 9 C11.5 9 14.5 10.5 14.5 14.5 C14.5 16 12.5 16.5 8 16.5 C3.5 16.5 1.5 16 1.5 14.5 Z" fill="url(#ug)"/>
<circle cx="8" cy="4.8" r="3.8" fill="url(#ug)"/>
</svg>
<div class="a t12" style="left:464px;top:522px;letter-spacing:-0.1px">Kevin Merta</div>
<div class="a t12" style="left:534px;top:522px;letter-spacing:-0.15px">Chat Server: Online</div>
<div class="a t12" style="left:644px;top:522px;letter-spacing:-0.2px">Refreshing in 166 seconds</div>
</body></html>
